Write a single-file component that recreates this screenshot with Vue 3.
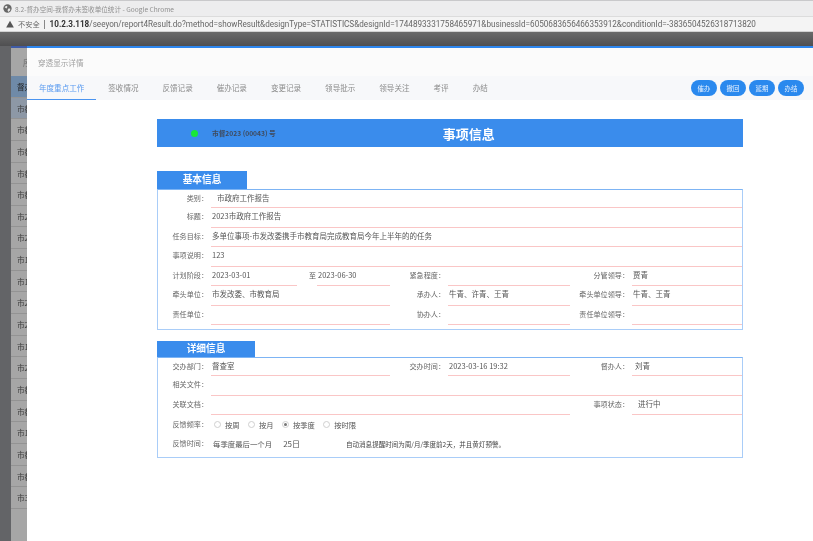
<script setup>
const listRows = ['督办', '市教', '市教', '市教', '市教', '市教', '市2', '市2', '市1', '市1', '市2', '市2', '市1', '市2', '市教', '市教', '市1', '市教', '市教', '市3']
const tabs = ['年度重点工作', '签收情况', '反馈记录', '催办记录', '变更记录', '领导批示', '领导关注', '考评', '办结']
const actions = ['催办', '撤回', '延期', '办结']
const radios = [
  { text: '按周', on: false },
  { text: '按月', on: false },
  { text: '按季度', on: true },
  { text: '按时限', on: false }
]
</script>

<template>
  <div class="page">
    <div class="titlebar">
      <svg class="globe" width="9" height="9" viewBox="0 0 10 10">
        <circle cx="5" cy="5" r="4.6" fill="#666" />
        <path d="M2 3l2-1 1 1-1 2-2-1zM6 5l2 0 0 2-2 2-1-2z" fill="#e8e8e8" />
      </svg>
      <span>8.2-督办空间-我督办未签收单位统计 - Google Chrome</span>
    </div>
    <div class="addressbar">
      <svg class="warn" width="8" height="8" viewBox="0 0 10 10">
        <path d="M5 .8L9.8 9.4H.2z" fill="#555" />
      </svg>
      <span class="insecure">不安全</span>
      <span class="sep"></span>
      <span class="url"><b>10.2.3.118</b>/seeyon/report4Result.do?method=showResult&amp;designType=STATISTICS&amp;designId=1744893331758465971&amp;businessId=6050683656466353912&amp;conditionId=-3836504526318713820</span>
    </div>
    <div class="overlay">
      <div class="band"></div>
      <div class="desk">
        <div class="stripe"></div>
        <div class="list">
          <div class="list-head"><span>序</span></div>
          <div v-for="(row, i) in listRows" :key="i" class="list-row" :class="{ current: i === 0, dotted: i === 1 }">{{ row }}</div>
        </div>
        <main class="modal">
          <div class="modal-title">穿透显示详情</div>
          <nav class="tabbar">
            <div class="tabs">
              <span v-for="(tab, i) in tabs" :key="tab" class="tab" :class="{ active: i === 0 }">{{ tab }}</span>
            </div>
            <div class="actions">
              <button v-for="a in actions" :key="a" class="pill">{{ a }}</button>
            </div>
          </nav>

          <div class="sheet">
            <header class="banner">
              <i class="dot"></i>
              <span class="code">市督2023 (00043) 号</span>
              <h1>事项信息</h1>
            </header>

            <h2 class="section first">基本信息</h2>
            <section class="box">
              <div class="row wide"><label>类别：</label><div class="val indent">市政府工作报告</div></div>
              <div class="row wide"><label>标题：</label><div class="val">2023市政府工作报告</div></div>
              <div class="row wide"><label>任务目标：</label><div class="val">多单位事项-市发改委携手市教育局完成教育局今年上半年的的任务</div></div>
              <div class="row wide"><label>事项说明：</label><div class="val">123</div></div>
              <div class="row">
                <label>计划阶段：</label>
                <div class="dates">
                  <div class="val">2023-03-01</div>
                  <span class="to">至</span>
                  <div class="val">2023-06-30</div>
                </div>
                <label>紧急程度：</label><div class="val"></div>
                <label>分管领导：</label><div class="val">贾青</div>
              </div>
              <div class="row">
                <label>牵头单位：</label><div class="val">市发改委、市教育局</div>
                <label>承办人：</label><div class="val">牛青、许青、王青</div>
                <label>牵头单位领导：</label><div class="val">牛青、王青</div>
              </div>
              <div class="row">
                <label>责任单位：</label><div class="val"></div>
                <label>协办人：</label><div class="val"></div>
                <label>责任单位领导：</label><div class="val"></div>
              </div>
            </section>

            <h2 class="section second">详细信息</h2>
            <section class="box detail">
              <div class="row">
                <label>交办部门：</label><div class="val">督查室</div>
                <label>交办时间：</label><div class="val">2023-03-16 19:32</div>
                <label>督办人：</label><div class="val small-indent">刘青</div>
              </div>
              <div class="row wide"><label>相关文件：</label><div class="val"></div></div>
              <div class="row">
                <label>关联文档：</label><div class="val span3"></div>
                <label>事项状态：</label><div class="val indent">进行中</div>
              </div>
              <div class="plain-row">
                <label>反馈频率：</label>
                <div class="radios">
                  <span v-for="r in radios" :key="r.text" class="radio-item">
                    <i class="radio" :class="{ on: r.on }"></i>{{ r.text }}
                  </span>
                </div>
              </div>
              <div class="plain-row">
                <label>反馈时间：</label>
                <span class="when">每季度最后一个月</span>
                <span class="day">25日</span>
                <span class="note">自动消息提醒时间为周/月/季度前2天，并且黄灯预警。</span>
              </div>
            </section>
          </div>
        </main>
      </div>
    </div>
  </div>
</template>

<style scoped>
.page {
  width: 813px;
  height: 541px;
  overflow: hidden;
  display: flex;
  flex-direction: column;
  font-family: "Noto Sans CJK SC", "Noto Sans", sans-serif;
  color: #555;
  filter: blur(0.4px);
}
.titlebar {
  height: 16px;
  flex: none;
  box-sizing: border-box;
  border-top: 1px solid #c9c9cb;
  background: #ededee;
  display: flex;
  align-items: center;
  padding-left: 3px;
  gap: 3px;
  font-size: 6.6px;
  color: #8f8f8f;
}
.addressbar {
  height: 16px;
  flex: none;
  box-sizing: border-box;
  background: #f4f4f4;
  border-top: 1px solid #dcdcdc;
  border-bottom: 1px solid #d2d2d2;
  display: flex;
  align-items: center;
  padding-left: 6px;
  font-size: 7.2px;
  color: #666;
  white-space: nowrap;
}
.insecure { margin-left: 4px; font-size: 7.2px; }
.sep { width: 1px; height: 9px; background: #888; margin: 0 5px 0 4px; }
.url {
  font-family: Roboto, "Noto Sans", sans-serif;
  font-size: 8.14px;
  color: #666;
}
.url b { color: #333; font-weight: 700; }
.overlay { flex: 1; min-height: 0; display: flex; flex-direction: column; background: #5f6063; }
.band { height: 14px; flex: none; background: linear-gradient(#6a6a6a, #4f4f51); }
.desk { flex: 1; min-height: 0; display: flex; }
.stripe { width: 11px; flex: none; background: #636467; }
.list {
  width: 16px;
  flex: none;
  overflow: hidden;
  background: #a6a6a6;
  border-top: 2px solid #3f5ba6;
  white-space: nowrap;
  font-size: 7.6px;
  color: #3c3c3c;
}
.list-head {
  height: 28px;
  display: flex;
  align-items: center;
  padding-left: 12px;
  color: #666;
}
.list-row {
  height: 21.65px;
  box-sizing: border-box;
  line-height: 21px;
  padding-left: 6px;
  border-bottom: 1px solid #939393;
}
.list-row.current { background: #6f8aa8; color: #222; }
.list-row.dotted { background: #8d98a6; }
.modal {
  flex: 1;
  min-width: 0;
  background: #fff;
  border-top: 2px solid #2d86ee;
}
.modal-title {
  height: 28px;
  background: #fbfbfb;
  padding-left: 11px;
  display: flex;
  align-items: center;
  font-size: 7.6px;
  color: #a0a0a0;
}
.tabbar {
  height: 24px;
  background: #f7f8fa;
  display: flex;
  justify-content: space-between;
  align-items: center;
  padding-right: 9px;
}
.tabs { display: flex; height: 100%; }
.tab {
  padding: 0 12px;
  font-size: 7.55px;
  line-height: 23px;
  color: #8b8b8b;
  white-space: nowrap;
}
.tab.active { color: #5a9bf0; border-bottom: 1px solid #4a94f0; height: 24px; box-sizing: border-box; }
.actions { display: flex; gap: 3px; }
.pill {
  width: 26px;
  height: 16px;
  padding: 0;
  border: 0;
  border-radius: 8px;
  background: #2a89ee;
  color: #e6f1ff;
  font: 6.4px "Noto Sans CJK SC", sans-serif;
}
.sheet { width: 586px; margin: 19px 0 0 130px; }
.banner {
  height: 28px;
  background: #3a8cec;
  display: flex;
  align-items: center;
}
.dot { width: 7px; height: 7px; border-radius: 50%; background: #17e83a; margin-left: 34px; }
.code { margin-left: 14px; font-size: 6.7px; font-weight: 700; color: #3f4a5c; }
.banner h1 {
  margin: 0 0 0 167px;
  font-size: 13px;
  font-weight: 700;
  color: #fff;
  line-height: 1;
}
.section {
  margin: 0;
  background: #3a8cec;
  color: #fff;
  font-size: 9.7px;
  font-weight: 700;
  line-height: 1;
  display: flex;
  align-items: center;
  justify-content: center;
}
.section.first { width: 90px; height: 18px; margin-top: 24px; }
.section.second { width: 98px; height: 16px; margin-top: 11px; }
.box {
  box-sizing: border-box;
  border: 1px solid #a9cdf8;
  border-top-color: #7db4f4;
  height: 141px;
}
.box.detail { height: 101px; }
.row {
  height: 19.5px;
  display: grid;
  grid-template-columns: 53px 179px 58px 122px 62px 110px;
  align-items: stretch;
}
.row:first-child { height: 18px; }
.row.wide { grid-template-columns: 53px 531px; }
.row label, .plain-row label {
  font-size: 7.1px;
  color: #666;
  text-align: right;
  padding-right: 3px;
  line-height: 17px;
  white-space: nowrap;
}
.val {
  box-sizing: border-box;
  border-bottom: 1px solid #fac6c6;
  font-size: 7.5px;
  line-height: 16px;
  color: #555;
  white-space: nowrap;
  overflow: hidden;
  padding-left: 1px;
}
.val.indent { padding-left: 6px; }
.val.small-indent { padding-left: 3px; }
.val.span3 { grid-column: span 3; }
.dates { display: grid; grid-template-columns: 86px 20px 73px; }
.to { font-size: 7px; line-height: 17px; text-align: right; padding-right: 1px; }
.plain-row {
  height: 19px;
  display: grid;
  grid-template-columns: 53px auto auto auto 1fr;
  justify-content: start;
  align-items: center;
}
.plain-row label { line-height: 19px; }
.radios { display: flex; padding-left: 3px; font-size: 7.3px; color: #555; grid-column: 2 / -1; }
.radio-item { display: flex; align-items: center; margin-right: 8.4px; }
.radio {
  width: 7px;
  height: 7px;
  box-sizing: border-box;
  border: 1px solid #d0d0d0;
  border-radius: 50%;
  margin-right: 4px;
  display: flex;
  align-items: center;
  justify-content: center;
}
.radio.on::after { content: ""; width: 3px; height: 3px; border-radius: 50%; background: #777; }
.when { font-size: 7.4px; padding-left: 2px; }
.day { font-size: 8px; margin-left: 11px; }
.note { font-size: 6.54px; margin-left: 46px; color: #444; white-space: nowrap; }
</style>
